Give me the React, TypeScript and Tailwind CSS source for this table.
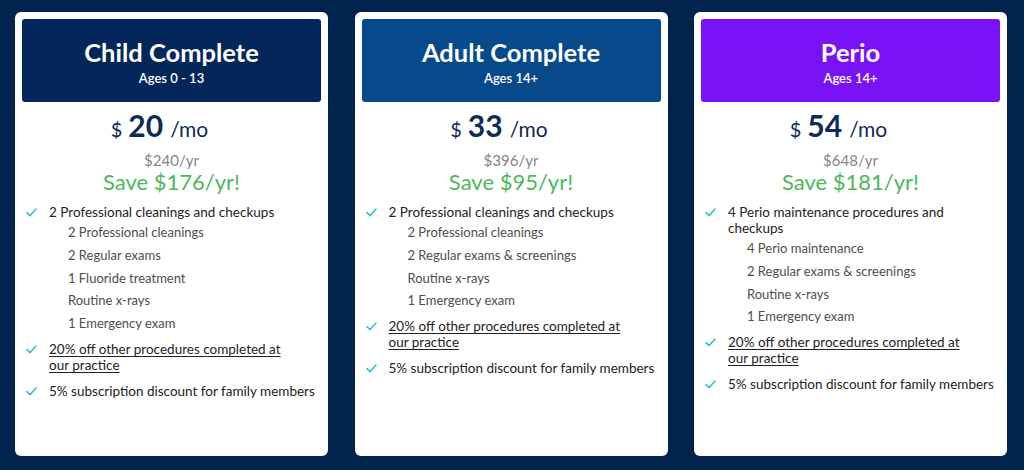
import React from "react";

type Plan = {
  title: string;
  ages: string;
  headerBg: string;
  price: string;
  yearly: string;
  save: string;
  mainItem: string;
  subs: string[];
};

const plans: Plan[] = [
  {
    title: "Child Complete",
    ages: "Ages 0 - 13",
    headerBg: "bg-[#03275a]",
    price: "20",
    yearly: "$240/yr",
    save: "Save $176/yr!",
    mainItem: "2 Professional cleanings and checkups",
    subs: [
      "2 Professional cleanings",
      "2 Regular exams",
      "1 Fluoride treatment",
      "Routine x-rays",
      "1 Emergency exam",
    ],
  },
  {
    title: "Adult Complete",
    ages: "Ages 14+",
    headerBg: "bg-[#064a8c]",
    price: "33",
    yearly: "$396/yr",
    save: "Save $95/yr!",
    mainItem: "2 Professional cleanings and checkups",
    subs: [
      "2 Professional cleanings",
      "2 Regular exams & screenings",
      "Routine x-rays",
      "1 Emergency exam",
    ],
  },
  {
    title: "Perio",
    ages: "Ages 14+",
    headerBg: "bg-[#7a12f6]",
    price: "54",
    yearly: "$648/yr",
    save: "Save $181/yr!",
    mainItem: "4 Perio maintenance procedures and checkups",
    subs: [
      "4 Perio maintenance",
      "2 Regular exams & screenings",
      "Routine x-rays",
      "1 Emergency exam",
    ],
  },
];

function Check() {
  return (
    <svg
      width="11"
      height="9"
      viewBox="0 0 11 9"
      className="mt-[4px] shrink-0"
      fill="none"
    >
      <path
        d="M1 4.6 L4 7.6 L10 1"
        stroke="#3cc0d2"
        strokeWidth="1.6"
        strokeLinecap="round"
        strokeLinejoin="round"
      />
    </svg>
  );
}

function Card({ plan }: { plan: Plan }) {
  return (
    <div className="w-[313px] h-[444px] bg-white rounded-[6px] p-[7px] flex flex-col">
      <div
        className={`${plan.headerBg} rounded-[3px] h-[83px] flex flex-col items-center justify-center text-white`}
      >
        <div className="text-[25.5px] font-bold leading-[30px] mt-[1px]">
          {plan.title}
        </div>
        <div className="text-[13px] font-semibold leading-[16px] mt-[3px]">
          {plan.ages}
        </div>
      </div>
      <div className="flex items-baseline justify-center text-[#0d2b5a] mt-[8px] h-[32px] pr-[24px]">
        <span className="text-[20px] leading-none mr-[6px]">$</span>
        <span className="text-[30px] font-bold leading-none">{plan.price}</span>
        <span className="text-[21px] leading-none ml-[7px]">/mo</span>
      </div>
      <div className="text-center text-[#858585] text-[15px] leading-[18px] mt-[9px]">
        {plan.yearly}
      </div>
      <div className="text-center text-[#4cb85a] text-[22px] leading-[26px]">
        {plan.save}
      </div>
      <ul className="mt-[9px] pl-[4px] text-[13.5px] text-[#222]">
        <li className="flex gap-[12px]">
          <Check />
          <div>
            <div className="leading-[16px]">{plan.mainItem}</div>
            <ul className="pl-[19px] mt-[1px] text-[#4d4d4d] text-[13px] leading-[22.8px]">
              {plan.subs.map((s) => (
                <li key={s}>{s}</li>
              ))}
            </ul>
          </div>
        </li>
        <li className="flex gap-[12px] mt-[6px]">
          <Check />
          <div className="leading-[16px] underline underline-offset-2 max-w-[240px]">
            20% off other procedures completed at our practice
          </div>
        </li>
        <li className="flex gap-[12px] mt-[10px]">
          <Check />
          <div className="leading-[16px] whitespace-nowrap">
            5% subscription discount for family members
          </div>
        </li>
      </ul>
    </div>
  );
}

export default function App() {
  return (
    <div
      className="w-[1024px] h-[470px] bg-[#03234f] flex gap-[26.5px] pl-[15px] pt-[12px]"
      style={{ fontFamily: "Lato, 'Open Sans', sans-serif" }}
    >
      {plans.map((p) => (
        <Card key={p.title} plan={p} />
      ))}
    </div>
  );
}
